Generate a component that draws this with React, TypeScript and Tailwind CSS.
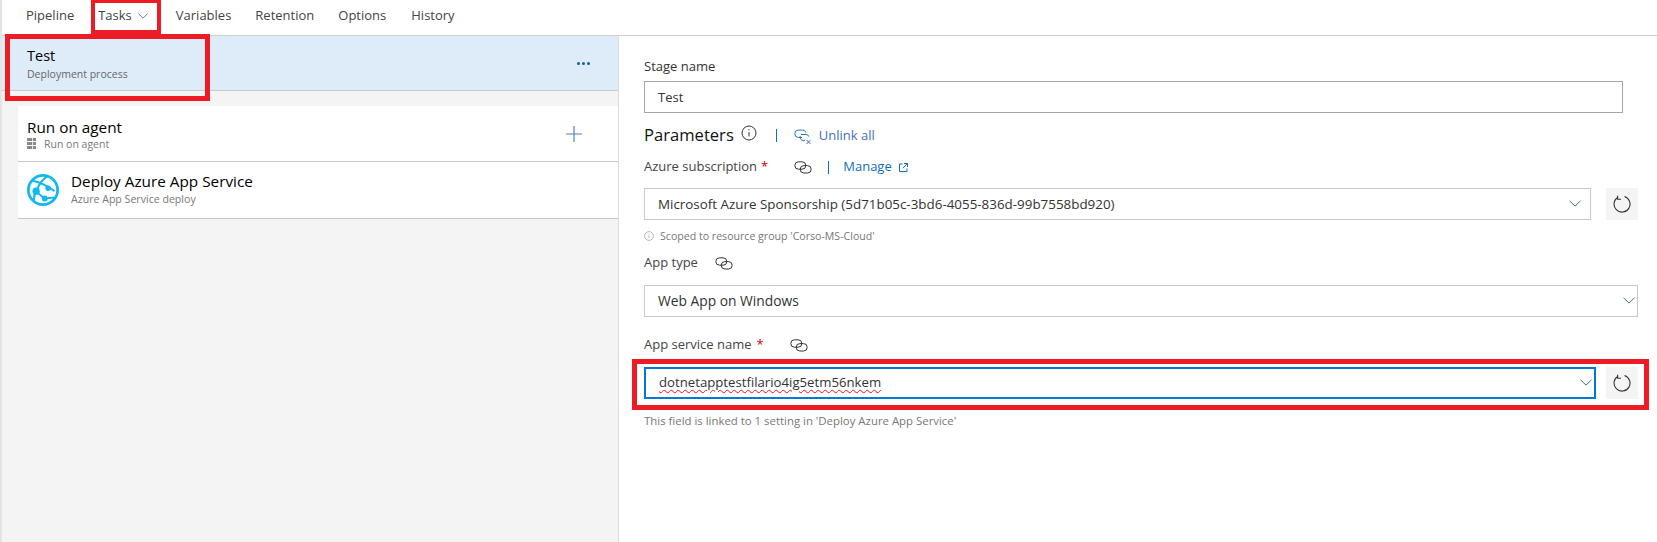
import React from "react";

const font = { fontFamily: '"Open Sans", "Noto Sans", sans-serif' };

function LinkIcon() {
  return (
    <svg width="18" height="13" viewBox="0 0 18 13" fill="none" stroke="#333" strokeWidth="1">
      <rect x="0.8" y="0.8" width="11" height="7.4" rx="3.7" />
      <rect x="6.2" y="4.6" width="11" height="7.4" rx="3.7" />
    </svg>
  );
}

function BlueLinkIcon() {
  return (
    <svg width="18" height="16" viewBox="0 0 18 16" fill="none" stroke="#2b78c2" strokeWidth="1">
      <path d="M8 8.5H4.5a3.7 3.7 0 0 1 0-7.4h4a3.7 3.7 0 0 1 3.5 2.6" />
      <path d="M7 5.5h5a3.2 3.2 0 0 1 3 2.2" />
      <path d="M6.2 7a3.4 3.4 0 0 0 3.3 4.6H11" />
      <path d="M12.5 11l4 4M16.5 11l-4 4" stroke="#3a6ea5" />
    </svg>
  );
}

function Chevron({ size = 12 }: { size?: number }) {
  return (
    <svg width={size} height={size * 0.6} viewBox="0 0 12 7" fill="none" stroke="#4a6b85" strokeWidth="1">
      <path d="M0.5 0.7L6 6l5.5-5.3" />
    </svg>
  );
}

function InfoIcon({ size = 16, color = "#333" }: { size?: number; color?: string }) {
  return (
    <svg width={size} height={size} viewBox="0 0 16 16" fill="none" stroke={color} strokeWidth="1">
      <circle cx="8" cy="8" r="7" />
      <path d="M8 7v4.5M8 4.2v1.2" />
    </svg>
  );
}

function RefreshButton() {
  return (
    <button className="w-8 h-8 bg-[#f4f4f4] flex items-center justify-center shrink-0">
      <svg width="18" height="18" viewBox="0 0 18 18" fill="none" stroke="#333" strokeWidth="1.1">
        <path d="M11.5 1.5A8 8 0 1 1 5 2.2" />
        <path d="M4.6 0.8v3.4H8" />
      </svg>
    </button>
  );
}

function SelectBox({ text, className = "border border-[#c8c8c8]", size = "text-[13.4px]", pr = "pr-[9px]" }: { text: React.ReactNode; className?: string; size?: string; pr?: string }) {
  return (
    <div className={`h-8 bg-white flex items-center justify-between pl-[13px] text-[#333] flex-1 ${pr} ${size} ${className}`}>
      <span>{text}</span>
      <Chevron />
    </div>
  );
}

function Tab({ label, children, className = "" }: { label: string; children?: React.ReactNode; className?: string }) {
  return (
    <div className={`flex items-center gap-[6px] text-[13px] text-[#444] ${className}`}>
      {label}
      {children}
    </div>
  );
}

function Globe() {
  return (
    <svg width="32" height="32" viewBox="0 0 28 28" fill="none">
      <circle cx="14" cy="14" r="12.8" stroke="#11b9ee" strokeWidth="2.4" />
      <g stroke="#11b9ee" strokeWidth="1.8" fill="none">
        <path d="M5 6c5 1 11 3 19 9" />
        <path d="M18 2c-4 2-7 6-10 13" />
        <path d="M8 15c3 3 5 5 8 6.5" />
        <path d="M8 15c-2 3-2 6-2 8" />
        <path d="M16 21.5l8-1" />
      </g>
      <circle cx="8" cy="15" r="3.2" fill="#11b9ee" />
      <circle cx="18.5" cy="12.5" r="2.4" fill="#11b9ee" />
      <circle cx="15.5" cy="21.5" r="2.6" fill="#11b9ee" />
    </svg>
  );
}

export default function App() {
  return (
    <div className="relative w-[1657px] h-[542px] bg-white overflow-hidden flex flex-col border-l-2 border-[#e4e4e4]" style={font}>
      <div className="h-[36px] shrink-0 border-b border-[#d0d0d0] flex items-center pl-[24px] pb-[4px]">
        <Tab label="Pipeline" />
        <Tab label="Tasks" className="ml-[24px] text-[#333]"><Chevron size={10} /></Tab>
        <Tab label="Variables" className="ml-[28px]" />
        <Tab label="Retention" className="ml-[24px]" />
        <Tab label="Options" className="ml-[24px]" />
        <Tab label="History" className="ml-[25px]" />
      </div>

      <div className="flex flex-1 min-h-0">
        <div className="w-[617px] shrink-0 bg-[#f4f4f4] border-r border-[#dcdcdc] flex flex-col">
          <div className="h-[55px] bg-[#deecf9] border-b border-[#c8c8c8] flex items-center justify-between pl-[25px] pr-[28px]">
            <div className="flex flex-col pt-[1px]">
              <span className="text-[14.5px] leading-[20px] text-black">Test</span>
              <span className="text-[10.5px] leading-[14px] text-[#666] mt-[1px]">Deployment process</span>
            </div>
            <div className="flex gap-[2px]">
              <span className="w-[3px] h-[3px] rounded-full bg-[#1a5a9a]" />
              <span className="w-[3px] h-[3px] rounded-full bg-[#1a5a9a]" />
              <span className="w-[3px] h-[3px] rounded-full bg-[#1a5a9a]" />
            </div>
          </div>

          <div className="ml-[16px] mt-[15px] h-[56px] bg-white border-b border-[#c8c8c8] flex items-center justify-between pl-[9px] pr-[36px]">
            <div className="flex flex-col">
              <span className="text-[15.3px] leading-[20px] text-black">Run on agent</span>
              <span className="flex items-center gap-[8px] text-[10.5px] leading-[14px] text-[#777]">
                <svg width="9" height="11" viewBox="0 0 9 11" fill="#888">
                  <rect x="0" y="0" width="9" height="3" />
                  <rect x="0" y="4" width="9" height="3" />
                  <rect x="0" y="8" width="9" height="3" />
                  <path d="M5.5 0v11" stroke="#fff" strokeWidth="0.8" />
                </svg>
                Run on agent
              </span>
            </div>
            <svg width="16" height="16" viewBox="0 0 16 16" stroke="#5b7fc0" strokeWidth="1.2">
              <path d="M8 0v16M0 8h16" />
            </svg>
          </div>

          <div className="ml-[16px] h-[57px] bg-white border-b border-[#c8c8c8] flex items-center pl-[9px] gap-[12px]">
            <Globe />
            <div className="flex flex-col mb-[4px]">
              <span className="text-[15.3px] leading-[20px] text-black">Deploy Azure App Service</span>
              <span className="text-[10.6px] leading-[14px] text-[#777] mt-[1px]">Azure App Service deploy</span>
            </div>
          </div>
        </div>

        <div className="flex-1 pl-[25px] pr-[19px] flex flex-col">
          <label className="mt-[21px] text-[13px] leading-[18px] text-[#333]">Stage name</label>
          <div className="mt-[6px] h-8 mr-[15px] border border-[#a6a6a6] flex items-center pl-[13px] pt-[2px] text-[13px] text-[#333]">Test</div>

          <div className="mt-[7px] flex items-center h-[30px]">
            <span className="text-[16.6px] text-[#111]">Parameters</span>
            <span className="ml-[7px] mb-[4px]"><InfoIcon /></span>
            <span className="ml-[19px] w-px h-[13px] bg-[#106ebe]" />
            <span className="ml-[17px] mt-[3px]"><BlueLinkIcon /></span>
            <span className="ml-[7px] mt-[2px] text-[13px] text-[#3f6fb5]">Unlink all</span>
          </div>

          <div className="mt-[7px] flex items-center h-[20px] text-[13px] text-[#444]">
            <span>Azure subscription<span className="ml-[4px] text-[#c00]">*</span></span>
            <span className="ml-[26px]"><LinkIcon /></span>
            <span className="ml-[16px] w-px h-[13px] bg-[#106ebe]" />
            <span className="ml-[14px] text-[#106ebe]">Manage</span>
            <svg className="ml-[7px]" width="9" height="9" viewBox="0 0 9 9" fill="none" stroke="#106ebe">
              <path d="M3.5 1H.5v7.5H8V5.5M5 .5h3.5V4M8.5.5L4 5" />
            </svg>
          </div>

          <div className="mt-[11px] flex items-center gap-[15px]">
            <SelectBox text="Microsoft Azure Sponsorship (5d71b05c-3bd6-4055-836d-99b7558bd920)" />
            <RefreshButton />
          </div>

          <div className="mt-[9px] flex items-center gap-[6px] text-[10.6px] leading-[14px] text-[#777]">
            <InfoIcon size={10} color="#888" />
            Scoped to resource group 'Corso-MS-Cloud'
          </div>

          <div className="mt-[10px] flex items-center h-[20px] text-[13px] text-[#444]">
            <span>App type</span>
            <span className="ml-[17px]"><LinkIcon /></span>
          </div>

          <div className="mt-[12px] flex">
            <SelectBox text="Web App on Windows" size="text-[13.8px]" pr="pr-[2px]" />
          </div>

          <div className="mt-[18px] flex items-center h-[20px] text-[13px] text-[#444]">
            <span>App service name<span className="ml-[5px] text-[#c00]">*</span></span>
            <span className="ml-[26px]"><LinkIcon /></span>
          </div>

          <div className="mt-[12px] flex items-center gap-[10px]">
            <SelectBox
              className="border-2 border-[#0078d7]"
              size="text-[13.2px]"
              pr="pr-[2px]"
              text={<span className="underline decoration-wavy decoration-[#e81123] decoration-1 underline-offset-2">dotnetapptestfilario4ig5etm56nkem</span>}
            />
            <RefreshButton />
          </div>

          <div className="mt-[15px] text-[11.4px] leading-[14px] text-[#777]">
            This field is linked to 1 setting in 'Deploy Azure App Service'
          </div>
        </div>
      </div>

      <div className="absolute left-[89px] top-0 w-[70px] h-[34px] border-[4px] border-t-[3px] border-[#ed1c24]" />
      <div className="absolute left-[3px] top-[34px] w-[205px] h-[67px] border-[5px] border-[#ed1c24]" />
      <div className="absolute left-[630px] top-[359px] w-[1017px] h-[51px] border-[5px] border-[#ed1c24]" />
    </div>
  );
}
